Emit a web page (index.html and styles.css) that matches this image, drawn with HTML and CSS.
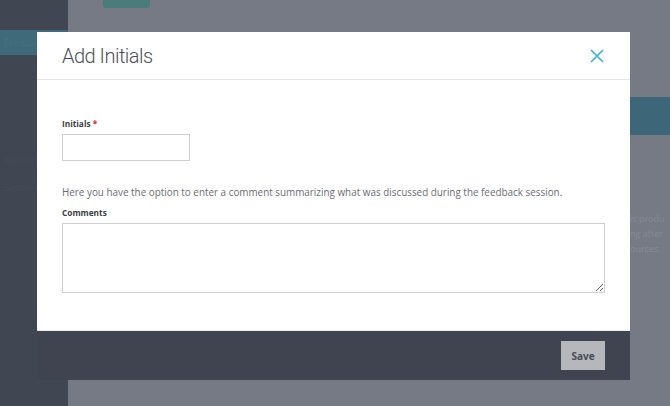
FILE: index.html
```html
<!DOCTYPE html>
<html lang="en">
<head>
    <meta charset="UTF-8">
    <title>Add Initials</title>
    <link rel="stylesheet" href="styles.css">
</head>
<body>

    <!-- Page behind the modal -->
    <div class="app">
        <aside class="sidebar">
            <div class="side-top"></div>
            <div class="side-item active">Feedback</div>
            <div class="side-item">Reports</div>
            <div class="side-item">Sessions</div>
        </aside>
        <main class="main">
            <div class="chip"></div>
            <div class="band"></div>
            <div class="blurb">
                <p>is produ</p>
                <p>ng after</p>
                <p>ources.</p>
            </div>
        </main>
    </div>

    <!-- Modal -->
    <div class="overlay">
        <div class="modal">
            <div class="modal-header">
                <h2>Add Initials</h2>
                <button class="close" aria-label="Close">
                    <svg width="14" height="14" viewBox="0 0 14 14">
                        <path d="M1 1 L13 13 M13 1 L1 13" stroke="#35b3df" stroke-width="1.6" fill="none"/>
                    </svg>
                </button>
            </div>
            <div class="modal-body">
                <label class="field-label" for="initials">Initials <span class="req">*</span></label>
                <input type="text" id="initials" class="input-small">

                <p class="help">Here you have the option to enter a comment summarizing what was discussed during the feedback session.</p>

                <label class="field-label" for="comments">Comments</label>
                <textarea id="comments"></textarea>
            </div>
            <div class="modal-footer">
                <button class="btn-save">Save</button>
            </div>
        </div>
    </div>

</body>
</html>
```

FILE: styles.css
```css
body {
    margin: 0;
    padding: 0;
    font-family: "Open Sans", Arial, sans-serif;
    background-color: #767a84;
    overflow: hidden;
}

.app {
    display: flex;
    height: 406px;
}

/* Barra lateral */
.sidebar {
    width: 68px;
    flex-shrink: 0;
    background-color: #414752;
    display: flex;
    flex-direction: column;
}

.side-top {
    height: 30px;
}

.side-item {
    height: 28px;
    line-height: 28px;
    padding-left: 4px;
    font-size: 9px;
    color: #464c57;
    overflow: hidden;
}

.side-item.active {
    height: 25px;
    line-height: 25px;
    background-color: #3e6a79;
    color: #45717f;
    margin-bottom: 91px;
}

.main {
    flex: 1;
    min-width: 0;
}

.chip {
    width: 47px;
    height: 8px;
    margin-left: 35px;
    background-color: #4a7c7c;
    border-radius: 0 0 3px 3px;
}

.band {
    height: 38px;
    margin-top: 89px;
    background-color: #3e6679;
}

.blurb {
    padding-left: 562px;
    margin-top: 76px;
}

.blurb p {
    margin: 0;
    font-size: 9px;
    line-height: 15px;
    color: #868a93;
    white-space: nowrap;
}

/* Modal */
.overlay {
    position: fixed;
    left: 37px;
    top: 32px;
}

.modal {
    width: 593px;
    background-color: #ffffff;
}

.modal-header {
    height: 47px;
    border-bottom: 1px solid #e6e6e6;
    display: flex;
    align-items: center;
    justify-content: space-between;
    padding: 0 25px;
}

.modal-header h2 {
    margin: 0;
    font-family: Roboto, Arial, sans-serif;
    font-weight: 300;
    font-size: 20px;
    letter-spacing: -0.5px;
    color: #4b4f56;
}

.close {
    background: none;
    border: none;
    padding: 0;
    width: 14px;
    height: 14px;
    margin-right: 1px;
    cursor: pointer;
}

.close svg {
    display: block;
}

.modal-body {
    padding: 36px 25px 37px 25px;
}

.field-label {
    display: block;
    font-size: 8.3px;
    font-weight: bold;
    line-height: 15px;
    color: #3c3f45;
    margin-bottom: 3px;
}

.req {
    color: #e0262d;
}

.input-small {
    display: block;
    box-sizing: border-box;
    width: 128px;
    height: 27px;
    border: 1px solid #cfcfcf;
    border-radius: 0;
    margin: 0;
}

.help {
    margin: 23px 0 4px 0;
    font-size: 9.9px;
    line-height: 17px;
    color: #6b6e74;
    white-space: nowrap;
}

textarea {
    display: block;
    box-sizing: border-box;
    width: 543px;
    height: 70px;
    border: 1px solid #cfcfcf;
    border-radius: 0;
    margin: 0;
}

.modal-footer {
    height: 49px;
    background-color: #3f4450;
    border-top: 1px solid #eeeeee;
    display: flex;
    align-items: center;
    justify-content: flex-end;
    padding: 0 25px;
}

.btn-save {
    width: 44px;
    height: 29px;
    background-color: #b5b7bb;
    border: none;
    border-radius: 0;
    font-family: "Open Sans", Arial, sans-serif;
    font-weight: bold;
    font-size: 10px;
    color: #474c57;
    padding: 0;
}
```
